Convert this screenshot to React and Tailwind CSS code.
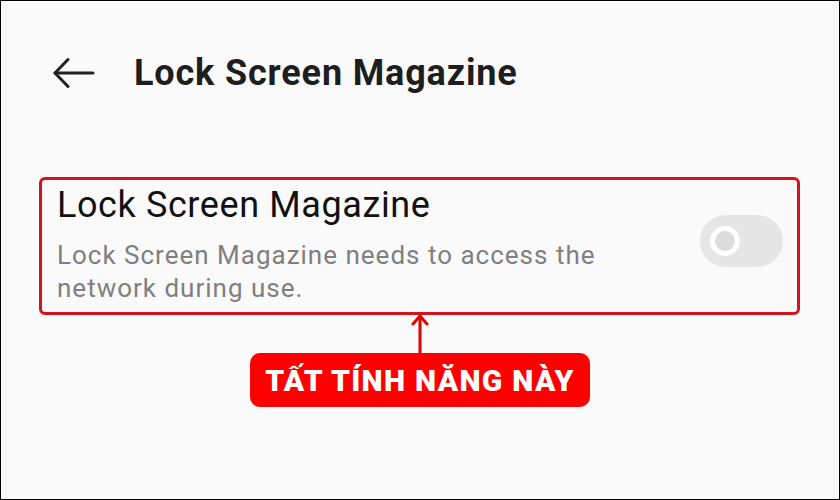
import React from 'react';

// Lock Screen Magazine settings screen with annotation
const BackArrow = () => (
    <svg width="42" height="32" viewBox="0 0 42 32" fill="none" stroke="#222" strokeWidth="3" strokeLinecap="round" strokeLinejoin="round">
        <path d="M2 16 H40" />
        <path d="M15 2.5 L2 16 L15 29.5" />
    </svg>
);

const Toggle = () => (
    <div className="w-[83px] h-[52px] mb-[10px] rounded-full bg-[#e6e6e6] flex items-center pl-[10px]">
        <div className="w-[30px] h-[30px] rounded-full border-[5px] border-white bg-[#dcdcdc]" />
    </div>
);

const UpArrow = () => (
    <svg width="18" height="40" viewBox="0 0 18 40" fill="none" stroke="#e00000" strokeWidth="3" strokeLinecap="round" strokeLinejoin="round">
        <path d="M9 3 V40" />
        <path d="M2 11 L9 3 L16 11" />
    </svg>
);

export default function App() {
    return (
        <div
            className="w-[840px] h-[500px] box-border border border-black bg-[#fafafa] flex flex-col"
            style={{ fontFamily: 'Roboto, "Noto Sans", sans-serif' }}
        >
            <header className="flex items-center h-[44px] mt-[50px] pl-[52px]">
                <BackArrow />
                <h1 className="ml-[39px] text-[36px] leading-[44px] font-bold text-[#1e1e1e] tracking-[0.85px]">
                    Lock Screen Magazine
                </h1>
            </header>

            <div className="mt-[82px] ml-[38px] w-[761px] h-[138px] box-border border-[3px] border-[#d4141c] rounded-[6px] flex items-center justify-between pl-[15px] pr-[14px]">
                <div className="self-start pt-[5px]">
                    <p className="text-[36px] leading-[40px] text-[#111] tracking-[0.6px]">Lock Screen Magazine</p>
                    <p className="mt-[14px] text-[26px] leading-[33px] text-[#7f7f7f] tracking-[1px] w-[600px]">
                        Lock Screen Magazine needs to access the network during use.
                    </p>
                </div>
                <Toggle />
            </div>

            <div className="flex flex-col items-center -mt-[2px]">
                <UpArrow />
                <div className="w-[340px] h-[54px] rounded-[10px] bg-[#ff0000] flex items-center justify-center">
                    <span className="text-white text-[30px] font-black tracking-[1.3px]">TẤT TÍNH NĂNG NÀY</span>
                </div>
            </div>
        </div>
    );
}
